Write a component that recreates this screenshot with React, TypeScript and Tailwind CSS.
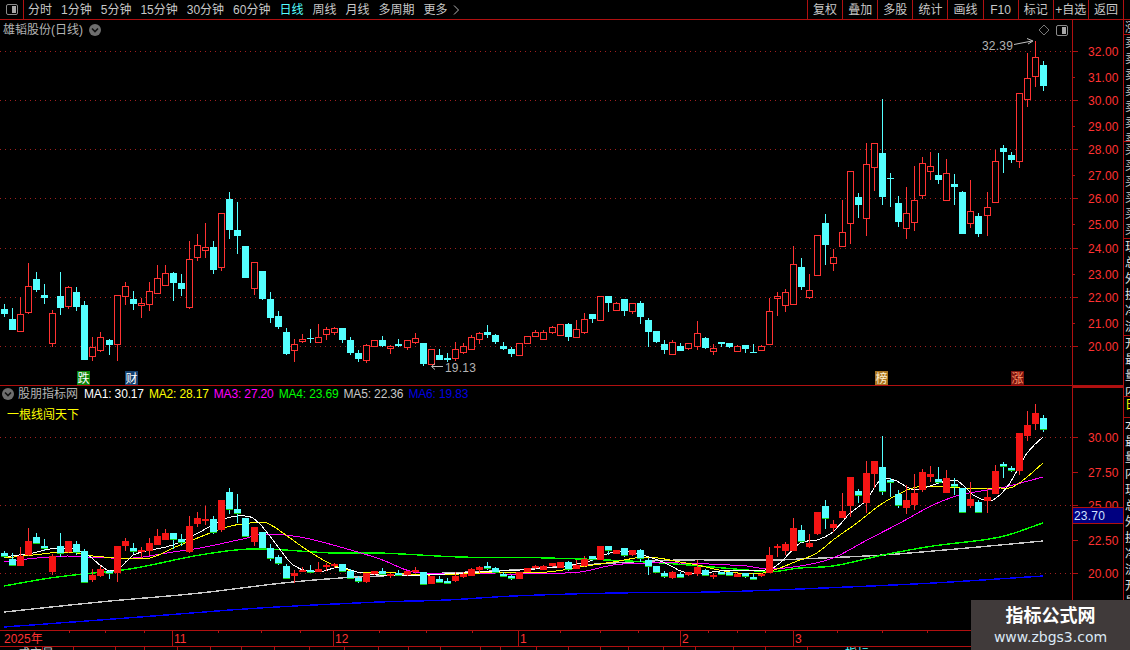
const cjk = "[font-family:'Liberation_Sans','Noto_Sans_CJK_SC',sans-serif]"

// [isRed, bodyTop, bodyBottom, high, low], in page pixels of the upper panel
const candles: number[][] = [
  [0,309,314,304,317],[0,319,330,308,330],[1,314,331,297,331],[1,286,312,263,314],[0,279,290,272,292],
  [0,295,298,284,304],[1,313,343,310,347],[0,296,308,272,315],[1,287,306,286,309],[0,292,307,287,311],
  [0,305,360,301,360],[1,347,356,337,361],[1,337,350,332,352],[0,340,345,339,355],[1,295,344,295,361],
  [1,286,296,282,305],[0,299,304,291,310],[1,303,305,298,318],[1,291,304,282,311],[1,278,293,265,293],
  [1,273,285,265,285],[0,273,283,272,301],[0,283,289,274,296],[1,259,307,241,309],[1,245,257,234,261],
  [1,247,250,223,258],[0,247,270,241,274],[1,213,267,213,271],[0,199,230,192,239],[0,230,236,202,254],
  [0,246,278,246,278],[1,262,288,262,295],[0,271,299,271,300],[0,299,318,292,323],[0,316,327,311,329],
  [0,332,354,328,355],[1,344,350,339,362],[1,339,341,334,343],[0,338,339,329,343],[1,337,342,324,343],
  [1,329,334,327,340],[1,328,332,327,335],[0,328,340,328,343],[0,340,353,337,355],[0,353,359,350,362],
  [1,345,360,344,363],[1,340,346,340,347],[0,340,346,336,347],[1,346,348,345,354],[0,344,346,339,347],
  [1,340,347,340,350],[1,338,342,333,344],[0,343,364,343,366],[1,349,364,349,364],[0,355,360,349,360],
  [0,358,360,353,362],[1,349,358,342,361],[1,346,352,343,354],[1,337,349,335,350],[1,333,339,332,344],
  [0,332,335,325,338],[0,335,342,334,344],[0,346,349,342,350],[0,349,354,347,357],[1,343,355,343,355],
  [1,336,343,336,343],[1,332,336,330,337],[1,332,339,330,339],[1,327,332,326,334],[1,324,335,324,336],
  [0,324,337,323,341],[1,329,337,320,337],[1,319,332,313,334],[0,314,319,314,323],[1,296,320,296,321],
  [0,296,303,296,312],[1,303,310,302,310],[0,299,311,299,316],[1,303,311,303,314],[0,303,317,301,324],
  [0,320,332,318,347],[0,331,342,331,343],[0,344,350,340,354],[1,342,354,340,355],[0,346,351,343,351],
  [1,343,348,343,350],[1,333,346,321,350],[0,338,348,337,349],[1,348,351,344,355],[0,342,344,342,347],
  [0,343,347,343,348],[1,346,351,345,351],[0,345,349,345,353],[0,352,353,344,353],[1,346,350,345,351],
  [1,311,344,298,344],[1,296,298,292,316],[1,292,305,289,312],[1,264,304,246,305],[0,267,287,258,290],
  [1,290,297,274,299],[1,235,275,235,276],[0,223,245,214,265],[1,257,263,249,271],[1,232,246,200,246],
  [1,171,223,171,244],[0,197,205,193,218],[1,164,218,143,236],[1,143,167,143,191],[0,153,197,99,205],
  [0,178,179,173,207],[0,203,222,196,227],[1,213,228,187,239],[1,200,222,166,231],[1,163,195,157,199],
  [1,166,171,152,180],[0,175,180,153,184],[1,173,200,159,200],[0,184,187,174,205],[0,192,234,191,234],
  [1,211,223,180,228],[0,216,234,213,237],[1,207,215,192,236],[1,161,202,150,203],[0,148,152,145,173],
  [0,155,160,152,163],[1,93,161,93,168],[1,78,99,53,107],[1,57,76,41,87],[0,65,86,61,91],
]

const maLines: { color: string; width: number; points: string }[] = [
  { color: '#0000ff', width: 1.4, points: '4,627 100,620 153,616 260,608 380,602 447,600 513,596 613,593 713,592 800,589 933,583 1043,576' },
  { color: '#c8c8c8', width: 1.4, points: '4,612 100,602 200,593 283,583 340,578 380,576 447,573 513,570 613,563 680,560 780,560 800,559 883,555 967,548 1043,541' },
  { color: '#00ff00', width: 1.4, points: '4,586 50,578 83,574 130,569 200,555 253,549 333,553 380,553 460,557 547,558 647,562 747,570 770,572 800,568 833,566 883,555 933,546 1000,537 1043,523' },
  { color: '#ff00ff', width: 1, points: '4,562 27,559 67,556 87,557 133,558 173,552 200,548 247,538 263,534 300,537 333,545 380,559 413,572 447,573 513,574 580,572 613,565 647,563 680,563 747,566 767,569 800,566 833,558 867,540 900,523 933,505 960,495 1000,488 1013,485 1043,477' },
  { color: '#ffff00', width: 1, points: '4,558 33,555 67,552 93,556 120,558 150,558 173,548 200,537 227,527 250,523 267,523 283,533 307,550 333,565 357,572 380,572 430,575 480,573 547,572 580,567 613,562 647,557 680,562 697,565 730,572 763,573 800,560 817,553 833,540 857,523 883,503 917,487 960,488 1000,488 1013,487 1033,472 1043,463' },
  { color: '#ffffff', width: 1, points: '4,557 33,553 57,548 83,552 107,570 118,570 133,555 173,545 200,532 227,518 253,518 273,540 293,565 317,572 340,567 357,572 380,575 423,575 480,572 547,568 587,562 610,553 630,552 663,562 687,573 730,570 773,568 800,543 817,540 833,532 850,513 867,500 880,480 897,481 913,490 933,485 957,480 973,495 993,500 1010,483 1027,453 1043,437' },
]

// the averages were read off at a few places: resample them one per candle
const smooth = (points: string) => {
  const p = points.split(' ').map(s => s.split(',').map(Number))
  const slope = (i: number) => {
    const a = p[Math.max(i - 1, 0)]
    const b = p[Math.min(i + 1, p.length - 1)]
    return (b[1] - a[1]) / (b[0] - a[0])
  }
  const out: string[] = []
  for (let i = 0; i < p.length - 1; i++) {
    const [x0, y0] = p[i]
    const [x1, y1] = p[i + 1]
    const h = x1 - x0
    const m0 = slope(i) * h
    const m1 = slope(i + 1) * h
    for (let x = x0; x < x1; x += 8) {
      const t = (x - x0) / h
      const y =
        (2 * t * t * t - 3 * t * t + 1) * y0 +
        (t * t * t - 2 * t * t + t) * m0 +
        (-2 * t * t * t + 3 * t * t) * y1 +
        (t * t * t - t * t) * m1
      out.push(`${x},${y.toFixed(1)}`)
    }
  }
  out.push(p[p.length - 1].join(','))
  return out.join(' ')
}

const maLegend = [
  { text: 'MA1: 30.17', cls: 'text-[#ffffff]' },
  { text: 'MA2: 28.17', cls: 'text-[#ffff00]' },
  { text: 'MA3: 27.20', cls: 'text-[#ff00ff]' },
  { text: 'MA4: 23.69', cls: 'text-[#00ff00]' },
  { text: 'MA5: 22.36', cls: 'text-[#c8c8c8]' },
  { text: 'MA6: 19.83', cls: 'text-[#0000e0]' },
]

const periods = ['分时', '1分钟', '5分钟', '15分钟', '30分钟', '60分钟', '日线', '周线', '月线', '多周期', '更多']
const tools = ['复权', '叠加', '多股', '统计', '画线', 'F10', '标记', '+自选', '返回']

const upperGrid = [51, 100, 149, 198, 248, 297, 346]
const upperLabels = [
  ['32.00', 51], ['31.00', 77], ['30.00', 100], ['29.00', 126], ['28.00', 149], ['27.00', 175], ['26.00', 198],
  ['25.00', 224], ['24.00', 248], ['23.00', 274], ['22.00', 297], ['21.00', 323], ['20.00', 346],
] as const
const lowerLabels = [['30.00', 437], ['27.50', 472], ['25.00', 505], ['22.50', 540], ['20.00', 573]] as const

const colOf = (i: number) => Math.floor(4.3 + 8.055 * i)
const toLower = (y: number) => Math.round(437 + (y - 100) * 0.557)

const UpperCandle = ({ c, i }: { c: number[]; i: number }) => {
  const x = colOf(i)
  const color = c[0] ? '#ff3232' : '#54ffff'
  return (
    <g>
      <rect x={x} y={c[3]} width={1} height={c[4] - c[3]} fill={color} />
      {c[0] ? (
        <rect x={x - 2.5} y={c[1] + 0.5} width={6} height={c[2] - c[1]} fill="#000" stroke={color} />
      ) : (
        <rect x={x - 3} y={c[1]} width={7} height={c[2] - c[1]} fill={color} />
      )}
    </g>
  )
}

const LowerCandle = ({ c, i }: { c: number[]; i: number }) => {
  const x = colOf(i)
  const top = toLower(c[1])
  const bottom = Math.max(toLower(c[2]), top + 2)
  return (
    <g>
      <rect x={x} y={toLower(c[3])} width={1} height={toLower(c[4]) - toLower(c[3])} fill={c[0] ? '#ff3232' : '#54ffff'} />
      <rect x={x - 3} y={top} width={7} height={bottom - top} fill={c[0] ? '#f51414' : '#54ffff'} />
      {c[0] ? null : <rect x={x - 3} y={bottom} width={7} height={1} fill="#14d214" />}
    </g>
  )
}

const RoundChevron = ({ className }: { className: string }) => (
  <svg viewBox="0 0 12 12" className={className}>
    <circle cx="6" cy="6" r="6" fill="#6e6e6e" />
    <path d="M3 4.5 L6 7.5 L9 4.5" fill="none" stroke="#111" strokeWidth="1.6" />
  </svg>
)

const PanelIcon = ({ className }: { className: string }) => (
  <svg viewBox="0 0 12 11" className={className}>
    <rect x="0.5" y="0.5" width="11" height="10" rx="1.5" fill="none" stroke="#8c8c8c" />
    <rect x="6" y="2" width="4" height="7" fill="#a8a8a8" />
  </svg>
)

const Tag = ({ x, text, bg, fg }: { x: number; text: string; bg: string; fg: string }) => (
  <g>
    <rect x={x} y={371} width={13} height={14} fill={bg} />
    <text x={x + 0.5} y={382.5} fontSize={12} fill={fg}>{text}</text>
  </g>
)

const DotGrid = ({ ys }: { ys: readonly number[] }) => (
  <g>
    {ys.map(y => (
      <line key={y} x1={0} x2={1072} y1={y + 0.5} y2={y + 0.5} stroke="#a02020" strokeDasharray="1 4" />
    ))}
  </g>
)

const UpperChart = () => (
  <svg width={1072} height={365} viewBox="0 20 1072 365" shapeRendering="crispEdges" className="block shrink-0">
    <DotGrid ys={upperGrid} />
    {candles.map((c, i) => <UpperCandle key={i} c={c} i={i} />)}
    <Tag x={77} text="跌" bg="#0a820a" fg="#ffffff" />
    <Tag x={125} text="财" bg="#14406e" fg="#ffffff" />
    <Tag x={875} text="榜" bg="#a87420" fg="#fff0d0" />
    <Tag x={1011} text="涨" bg="#7a1410" fg="#ff9060" />
    <g shapeRendering="auto">
      <text x={445} y={372} fontSize={12} fill="#b4b4b4" letterSpacing={0.2}>19.13</text>
      <path d="M443 366.5 H432 M435 363.5 L431.5 366.5 L435 369.5" fill="none" stroke="#c0c0c0" />
      <text x={982} y={50} fontSize={12} fill="#b4b4b4" letterSpacing={0.2}>32.39</text>
      <path d="M1014 44.5 L1032 41 M1027 38.5 L1033 41 L1028 44" fill="none" stroke="#c0c0c0" />
    </g>
  </svg>
)

const LowerChart = () => (
  <svg width={1072} height={244} viewBox="0 386 1072 244" shapeRendering="crispEdges" className="block shrink-0">
    <DotGrid ys={[437, 505, 573]} />
    {maLines.map(l => (
      <polyline key={l.color} points={smooth(l.points)} fill="none" stroke={l.color} strokeWidth={l.width} />
    ))}
    {candles.map((c, i) => <LowerCandle key={i} c={c} i={i} />)}
  </svg>
)

const UpperAxis = () => (
  <svg width={50} height={365} viewBox="1073 20 50 365" className="block">
    {upperLabels.map(([t, y], i) => (
      <g key={t}>
        <rect x={1073} y={y} width={i % 2 ? 2 : 5} height={1} fill="#b01010" />
        <text x={1088} y={y + 4.5} fontSize={12} fill="#ff3232" letterSpacing={0.1}>{t}</text>
      </g>
    ))}
  </svg>
)

const LowerAxis = () => (
  <svg width={50} height={242} viewBox="1073 388 50 242" className="block">
    {lowerLabels.map(([t, y]) => (
      <g key={t}>
        <rect x={1073} y={y} width={5} height={1} fill="#b01010" />
        <text x={1088} y={y + 4.5} fontSize={12} fill="#ff3232" letterSpacing={0.1}>{t}</text>
      </g>
    ))}
  </svg>
)

const timeDividers = [172, 333, 518, 680, 793]
const timeTicks = [69, 105, 144, 218, 261, 300, 379, 426, 472, 560, 600, 638, 708, 737, 765, 837, 882, 927]
const timeLabels = [['2025年', 4], ['11', 174], ['12', 335], ['1', 520], ['2', 682], ['3', 795]] as const
const footDividers = [42, 73, 115, 144, 177, 210, 241, 274, 309, 344, 378, 408, 440, 480, 500, 536, 568, 600, 628, 663, 695, 733, 765, 807, 855]

const TimeAxis = () => (
  <svg width={1123} height={15} viewBox="0 0 1123 15" className="block">
    {timeDividers.map(x => <rect key={x} x={x} y={0} width={1} height={15} fill="#b01010" />)}
    {timeTicks.map(x => <rect key={x} x={x} y={0} width={1} height={2} fill="#b01010" />)}
    {timeLabels.map(([t, x]) => (
      <text key={t} x={x} y={12} fontSize={12} fill="#ff3232">{t}</text>
    ))}
  </svg>
)

const FootRow = () => (
  <svg width={1123} height={3} viewBox="0 0 1123 3" className="block">
    {footDividers.map(x => <rect key={x} x={x} y={0} width={1} height={3} fill="#b01010" />)}
    <text x={18} y={11} fontSize={12} fill="#c8c8c8">成交量</text>
    <text x={845} y={11} fontSize={12} fill="#54ffff">指标</text>
  </svg>
)

const strip: { rows: string[]; cls: string }[] = [
  { rows: ['涨'], cls: 'h-[15px] border-b border-[#b01010] text-[#c8c8c8]' },
  { rows: ['卖', '卖', '卖', '卖', '卖', '卖', '卖'], cls: 'h-[107px] border-b border-[#b01010] text-[#c8c8c8]' },
  { rows: ['买', '买', '买', '买', '买', '买'], cls: 'h-[97px] border-b border-[#b01010] text-[#c8c8c8]' },
  { rows: ['现', '总', '外', '换', '净', '流'], cls: 'h-[97px] border-b border-[#b01010] text-[#e0e0e0]' },
  { rows: ['开', '最', '量', '内'], cls: 'h-[61px] border-b border-[#b01010] text-[#e0e0e0]' },
  { rows: ['日'], cls: 'h-[21px] border-b border-[#b01010] text-[#ffff00]' },
  { rows: ['本', '最', '量', '内', '现', '总', '外', '换', '净', '流', '开', '最', '量', '内'], cls: 'flex-1 text-[#e0e0e0]' },
]

const App = () => {
  return (
    <div className={`relative h-[650px] w-[1130px] overflow-hidden bg-black text-xs ${cjk}`}>
      <div className="flex h-5 items-center border-b border-[#b01010] text-[#c8c8c8]">
        <div className="flex h-full w-6 items-center justify-center border-r border-[#b01010]">
          <PanelIcon className="h-[11px] w-3" />
        </div>
        <div className="ml-1 flex items-center gap-[9px]">
          {periods.map(p => (
            <span key={p} className={p === '日线' ? 'text-[#54ffff]' : ''}>{p}</span>
          ))}
          <svg viewBox="0 0 6 10" className="-ml-1 h-[10px] w-[6px]">
            <path d="M1 0.5 L5.5 5 L1 9.5" fill="none" stroke="#b4b4b4" />
          </svg>
        </div>
        <div className="ml-auto flex h-full w-[323px]">
          {tools.map(t => (
            <div key={t} className="flex h-full flex-1 items-center justify-center border-l border-[#b01010] whitespace-nowrap">{t}</div>
          ))}
          <div className="w-[7px] shrink-0 border-l border-[#b01010]" />
        </div>
      </div>

      <div className="flex h-[630px]">
        <div className="w-[1123px] shrink-0">
          <div className="relative flex h-[366px] border-b border-[#b01010]">
            <UpperChart />
            <div className="flex-1 border-l border-[#b01010]"><UpperAxis /></div>
            <div className="absolute top-[1px] left-[3px] flex items-center gap-[6px] text-[#b4b4b4]">
              <span className="leading-[18px]">雄韬股份(日线)</span>
              <RoundChevron className="h-3 w-3" />
            </div>
            <div className="absolute top-[4px] left-[1038px] flex items-center gap-[6px]">
              <svg viewBox="0 0 12 12" className="h-3 w-3">
                <path d="M6 1 L11 6 L6 11 L1 6 Z" fill="none" stroke="#787878" />
              </svg>
              <PanelIcon className="h-[11px] w-3" />
            </div>
          </div>

          <div className="relative flex h-[244px]">
            <LowerChart />
            <div className="flex-1 border-t-2 border-l border-[#b01010]"><LowerAxis /></div>
            <div className="absolute top-[-1px] left-[2px] flex items-center">
              <RoundChevron className="h-3 w-3" />
              <span className="ml-[4px] leading-[18px] text-[#b4b4b4]">股朋指标网</span>
              <div className="ml-[6px] flex gap-[5px] whitespace-nowrap">
                {maLegend.map(m => <span key={m.text} className={`tracking-[-0.15px] ${m.cls}`}>{m.text}</span>)}
              </div>
            </div>
            <div className="absolute top-[21px] left-[7px] text-[#ffff00]">一根线闯天下</div>
            <div className="absolute top-[121px] left-[1073px] flex h-[17px] w-[50px] items-center border-y border-[#b01010] bg-[#000080] pl-px tracking-[0.2px] text-[#cfe0ff]">23.70</div>
          </div>

          <div className="border-y border-[#b01010]"><TimeAxis /></div>
          <FootRow />
        </div>

        <div className="flex w-[7px] flex-col overflow-hidden border-l border-[#b01010]">
          {strip.map((s, i) => (
            <div key={i} className={`shrink-0 overflow-hidden pl-px leading-[16px] ${s.cls}`}>
              {s.rows.map((r, j) => <div key={j}>{r}</div>)}
            </div>
          ))}
        </div>
      </div>

      <div className="absolute right-0 bottom-0 flex h-[50px] w-[159px] flex-col items-center bg-[#403a3a]">
        <span className="mt-[6px] text-lg leading-[20px] font-bold text-white">指标公式网</span>
        <span className="mt-px font-['DejaVu_Sans',sans-serif] text-sm leading-[20px] text-[#dbe8f5]">www.zbgs3.com</span>
      </div>
    </div>
  )
}

export default App
